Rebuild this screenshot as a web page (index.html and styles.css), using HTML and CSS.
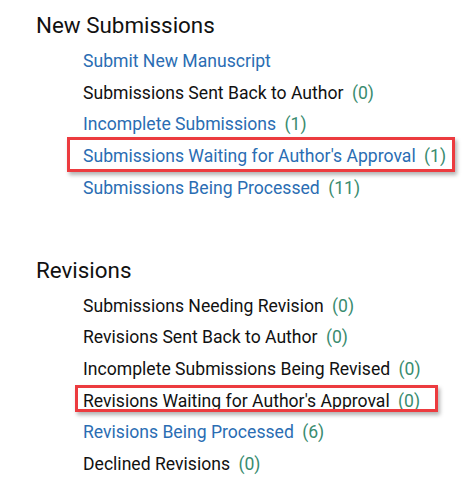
FILE: index.html
```html
<!DOCTYPE html>
<html>
<head>
  <meta charset="UTF-8">
  <title>Author Dashboard</title>
  <link rel="stylesheet" href="styles.css">
</head>
<body>
  <main>
    <section class="group">
      <h2>New Submissions</h2>
      <ul>
        <li><a href="#">Submit New Manuscript</a></li>
        <li>Submissions Sent Back to Author <span class="count">(0)</span></li>
        <li><a href="#">Incomplete Submissions</a> <span class="count">(1)</span></li>
        <li><a href="#">Submissions Waiting for Author's Approval</a> <span class="count">(1)</span>
          <span class="mark mark-one"></span>
        </li>
        <li><a href="#">Submissions Being Processed</a> <span class="count">(11)</span></li>
      </ul>
    </section>
    <section class="group second">
      <h2>Revisions</h2>
      <ul>
        <li>Submissions Needing Revision <span class="count">(0)</span></li>
        <li>Revisions Sent Back to Author <span class="count">(0)</span></li>
        <li>Incomplete Submissions Being Revised <span class="count">(0)</span></li>
        <li>Revisions Waiting for Author's Approval <span class="count">(0)</span>
          <span class="mark mark-two"></span>
        </li>
        <li><a href="#">Revisions Being Processed</a> <span class="count">(6)</span></li>
        <li>Declined Revisions <span class="count">(0)</span></li>
      </ul>
    </section>
  </main>
</body>
</html>
```

FILE: styles.css
```css
body {
  margin: 0;
  padding: 0;
  background: #fff;
  font-family: Roboto, "Liberation Sans", Arial, sans-serif;
  color: #111;
}
main {
  padding: 13px 0 0 36px;
}
h2 {
  margin: 0 0 9px 0;
  font-size: 22.4px;
  font-weight: 400;
  line-height: 24px;
  color: #111;
}
.second {
  margin-top: 53px;
}
ul {
  list-style: none;
  margin: 0;
  padding: 0 0 0 47px;
}
li {
  position: relative;
  font-size: 17.6px;
  line-height: 31.7px;
}
a {
  color: #2a6db3;
  text-decoration: none;
}
.count {
  margin-left: 4px;
  color: #3a8c6f;
}
/* red annotation boxes */
.mark {
  position: absolute;
  border: 3px solid #ec3b3f;
  box-shadow: 2px 3px 4px rgba(0,0,0,0.3);
}
.mark-one {
  left: -16px;
  top: -4px;
  width: 382px;
  height: 29px;
}
.mark-two {
  left: -8px;
  top: -1px;
  width: 357px;
  height: 21px;
}
```
